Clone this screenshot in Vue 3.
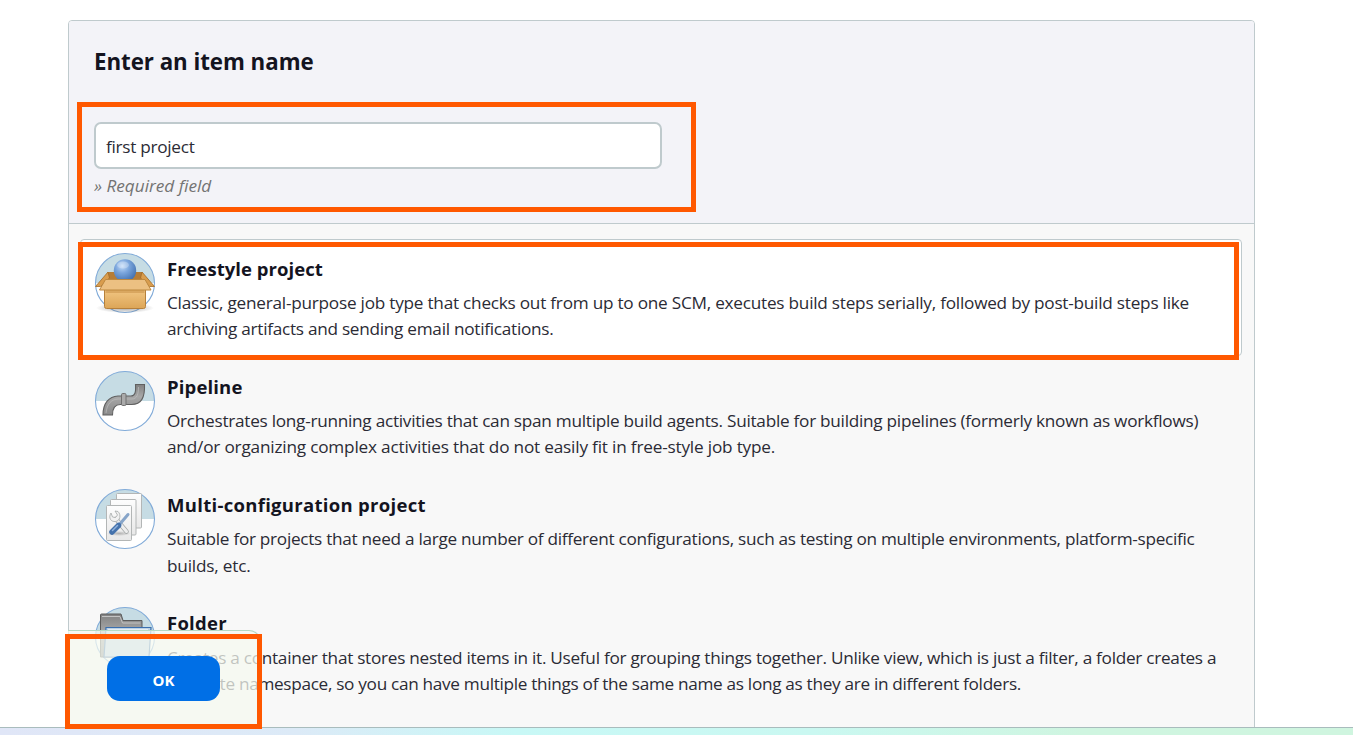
<script setup>
const items = [
  {
    icon: 'box',
    title: 'Freestyle project',
    titleTracking: 0.03,
    tracking: [-0.236, -0.27],
    active: true,
    lines: [
      'Classic, general-purpose job type that checks out from up to one SCM, executes build steps serially, followed by post-build steps like',
      'archiving artifacts and sending email notifications.',
    ],
  },
  {
    icon: 'pipe',
    title: 'Pipeline',
    titleTracking: 0.15,
    tracking: [-0.266, -0.19],
    lines: [
      'Orchestrates long-running activities that can span multiple build agents. Suitable for building pipelines (formerly known as workflows)',
      'and/or organizing complex activities that do not easily fit in free-style job type.',
    ],
  },
  {
    icon: 'config',
    title: 'Multi-configuration project',
    titleTracking: 0.3,
    tracking: [-0.285, -0.2],
    lines: [
      'Suitable for projects that need a large number of different configurations, such as testing on multiple environments, platform-specific',
      'builds, etc.',
    ],
  },
  {
    icon: 'folder',
    title: 'Folder',
    titleTracking: 0.25,
    tracking: [-0.277, -0.31],
    lines: [
      'Creates a container that stores nested items in it. Useful for grouping things together. Unlike view, which is just a filter, a folder creates a',
      'separate namespace, so you can have multiple things of the same name as long as they are in different folders.',
    ],
  },
]
</script>

<template>
  <div class="page">
    <main class="panel">
      <header class="head">
        <h1>Enter an item name</h1>
        <div class="field"><span>first project</span></div>
        <p class="hint">» Required field</p>
      </header>
      <ul class="items">
        <li v-for="item in items" :key="item.title" :class="['item', item.icon, { active: item.active }]">
          <svg class="icon" viewBox="0 0 62 62">
            <defs>
              <linearGradient id="card" x1="0" y1="0" x2="0" y2="1">
                <stop offset="0" stop-color="#f3c987" /><stop offset="1" stop-color="#dca557" />
              </linearGradient>
              <radialGradient id="ball" cx=".38" cy=".3" r=".7">
                <stop offset="0" stop-color="#c4dcf8" /><stop offset=".45" stop-color="#7aa5dc" /><stop offset="1" stop-color="#4674b2" />
              </radialGradient>
              <linearGradient id="steel" x1="0" y1="0" x2="0" y2="1">
                <stop offset="0" stop-color="#818181" /><stop offset=".4" stop-color="#a7a7a7" /><stop offset="1" stop-color="#888" />
              </linearGradient>
              <linearGradient id="paper" x1="0" y1="0" x2="0" y2="1">
                <stop offset="0" stop-color="#fdfdfd" /><stop offset="1" stop-color="#e8e8e8" />
              </linearGradient>
              <radialGradient id="shade">
                <stop offset="0" stop-color="#555" stop-opacity=".55" /><stop offset="1" stop-color="#555" stop-opacity="0" />
              </radialGradient>
            </defs>
            <circle cx="31" cy="31" r="29.6" fill="#fff" />
            <path d="M1.4 31a29.6 29.6 0 0 1 59.2 0Z" fill="#c6dce4" />
            <circle cx="31" cy="31" r="29.5" fill="none" stroke="#80aad8" stroke-width="1.1" />
            <g v-if="item.icon === 'box'">
              <ellipse cx="31" cy="56" rx="29" ry="5" fill="url(#shade)" />
              <path d="M14 20h34l5 8H9Z" fill="#b67d37" />
              <path d="M14 20 1.500 34.500h5l9-8.500ZM48 20l12.500 14.500h-5L46.500 26Z" fill="#d99d4e" stroke="#a36a23" stroke-width=".8" />
              <circle cx="31" cy="18.500" r="11.200" fill="url(#ball)" />
              <ellipse cx="29" cy="13" rx="6" ry="3.500" fill="#fff" opacity=".25" />
              <path d="M10.500 36h41v18.500q0 2-2 2h-37q-2 0-2-2Z" fill="url(#card)" stroke="#b6803b" />
              <path d="M11.500 38h39v3h-39Z" fill="#c48b42" opacity=".5" />
              <path d="M11.500 27.500h39.500l6 10.500H5.500Z" fill="#ecc082" stroke="#bd883f" />
            </g>
            <g v-else-if="item.icon === 'pipe'">
              <path d="M9 45c0-12 6-18.500 15-19h13c4 0 5-3.500 4.500-11.500h9c.500 13-3 20-13 20H26.500c-5 0-8 4-8 10.500Z" fill="url(#steel)" stroke="#606060" stroke-width="1.100" />
              <path d="M12 43c1-9 5-13.500 12-14h14c5 0 6.500-5 6.500-12" fill="none" stroke="#c0c0c0" opacity=".65" />
              <rect x="27.500" y="23.500" width="4.500" height="12" rx="1.200" fill="#aaa" stroke="#707070" />
            </g>
            <g v-else-if="item.icon === 'config'">
              <g fill="url(#paper)" stroke="#b3b6b6">
                <rect x="22.500" y="5.500" width="25" height="34.500" rx="1" />
                <rect x="16.500" y="11.500" width="25.500" height="35.500" rx="1" />
                <rect x="12.500" y="17.500" width="25" height="35" rx="1" />
              </g>
              <ellipse cx="25" cy="45.500" rx="12" ry="2.500" fill="url(#shade)" opacity=".7" />
              <path d="m22 31 10.500 12.500" stroke="#a4a8a8" stroke-width="4.500" stroke-linecap="round" />
              <path d="m22 31 10.500 12.500" stroke="#eee" stroke-width="3" stroke-linecap="round" />
              <path d="M17 25c-3 5 0 9 4.500 8.500S27.500 27 24 23.500l-3-.500 2.500 4-2 2.500-3-.500Z" fill="#f1f1f1" stroke="#a4a8a8" stroke-width=".8" />
              <path d="M34 26.500 25.500 36.500" stroke="#87a5c9" stroke-width="3" stroke-linecap="round" />
              <path d="m24.500 37.500-6.500 6.500" stroke="#4472ac" stroke-width="5.500" stroke-linecap="round" />
              <path d="m23.500 37.500-5 5" stroke="#8fb2dd" stroke-width="1.500" stroke-linecap="round" />
            </g>
            <g v-else>
              <path d="M6.500 51V9q0-1 1-1h19.500l2 6.500h19V51Z" fill="url(#steel)" stroke="#5c5c5c" />
              <path d="M8 10.500h18l2.500 6.500h18" fill="none" stroke="#c3c3c3" />
              <path d="M12 21.500h45L55 51H10Z" fill="#bdd2e4" stroke="#3b6faf" stroke-width="1.200" />
              <path d="M14 23.500h40" stroke="#e5eef5" />
            </g>
          </svg>
          <div class="copy">
            <h2 :style="{ letterSpacing: item.titleTracking + 'px' }">{{ item.title }}</h2>
            <p v-for="(line, n) in item.lines" :key="n" :class="'line' + n" :style="{ letterSpacing: item.tracking[n] + 'px' }">{{ line }}</p>
          </div>
        </li>
      </ul>
    </main>
    <div class="okbar"><button type="button">OK</button></div>
    <footer class="foot"></footer>
    <div class="mark mark-name"></div>
    <div class="mark mark-type"></div>
    <div class="mark mark-ok"></div>
  </div>
</template>

<style>
body { background: #fff; overflow: hidden; }
</style>

<style scoped>
* { box-sizing: border-box; margin: 0; padding: 0; }
.page { position: relative; width: 1353px; height: 735px; padding: 20px 98px 0 68px; overflow: hidden; color: #14141f; font-family: "Open Sans", "Noto Sans", sans-serif; font-size: 17.2px; }
.panel { width: 1187px; height: 730px; border: 1px solid #bfcacd; border-radius: 4px; background: #f8f8f8; overflow: hidden; }
.head { height: 203px; padding: 25px 25px 0; background: #f3f3f8; border-bottom: 1px solid #bfcacd; }
h1 { font-size: 22.3px; line-height: 32px; font-weight: 700; letter-spacing: -.04px; white-space: nowrap; }
.field { width: 568px; height: 47px; margin-top: 44px; padding: 1px 10px 0; border: 2px solid #bfcacd; border-radius: 7px; background: #fff; display: flex; align-items: center; letter-spacing: -.28px; color: #2b2b35; }
.hint { margin-top: 4px; line-height: 26px; font-style: italic; color: #737373; white-space: nowrap; }
.items { list-style: none; padding: 15px 12px 0 11px; }
.item { display: flex; height: 117px; margin-bottom: 1px; padding: 12px 0 0 13px; border: 1px solid transparent; border-radius: 4px; }
.item.active { background: #fff; border-color: #bfcacd; }
.icon { width: 62px; height: 62px; flex: none; }
.copy { margin-left: 11px; padding-top: 3px; white-space: nowrap; }
h2 { font-size: 18.5px; line-height: 28px; font-weight: 700; }
.copy p { line-height: 26px; color: #2b2b35; }
.copy .line0 { margin-top: 7px; }
.config .line1 { margin-top: 1px; }
.folder .line0 { margin-top: 8px; }
.okbar { position: absolute; left: 68px; top: 630px; width: 193px; height: 97px; padding: 25px 0 0 39px; border: 1px solid #b5d9c2; border-left: 0; border-radius: 0 12px 0 0; background: rgba(246, 250, 240, .74); }
button { display: block; width: 113px; height: 45px; border: 0; border-radius: 13px; background: #006fe6; color: #fff; font: 700 15px/49px "Open Sans", "Noto Sans", sans-serif; }
.foot { position: absolute; left: 0; right: 0; top: 727px; height: 8px; border-top: 1px solid #a9bcbd; background: linear-gradient(90deg, #e0e6f7 0, #dceaf7 22%, #c8f8f6 38%, #caf8f1 60%, #cff5e0 80%, #cff5df 100%); }
.mark { position: absolute; border: 5px solid #ff5800; }
.mark-name { left: 77px; top: 102px; width: 619px; height: 110px; }
.mark-type { left: 78.400px; top: 242px; width: 1161px; height: 118px; }
.mark-ok { left: 65px; top: 634px; width: 197px; height: 95.400px; }
</style>
